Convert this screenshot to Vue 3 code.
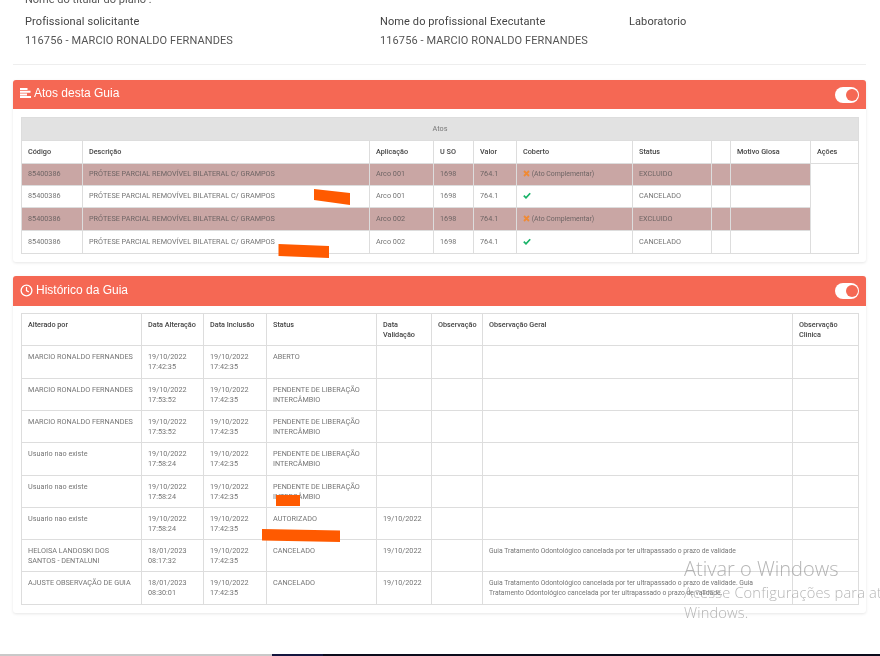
<script setup>
const atosCols = [61, 287, 64, 40, 43, 116, 79, 19, 80, 48]
const atosHead = ['Código', 'Descrição', 'Aplicação', 'U SO', 'Valor', 'Coberto', 'Status', '', 'Motivo Glosa', 'Ações']
const desc = 'PRÓTESE PARCIAL REMOVÍVEL BILATERAL C/ GRAMPOS'
const atos = [
  { arco: 'Arco 001', status: 'EXCLUIDO', glosa: true, h: 22 },
  { arco: 'Arco 001', status: 'CANCELADO', glosa: false, h: 22 },
  { arco: 'Arco 002', status: 'EXCLUIDO', glosa: true, h: 23 },
  { arco: 'Arco 002', status: 'CANCELADO', glosa: false, h: 23 }
]
const histCols = [120, 62, 63, 110, 55, 51, 310, 66]
const histHead = ['Alterado por', 'Data Alteração', 'Data Inclusão', 'Status', 'Data Validação', 'Observação', 'Observação Geral', 'Observação Clinica']
const marcio = 'MARCIO RONALDO FERNANDES'
const usuario = 'Usuario nao existe'
const pend = 'PENDENTE DE LIBERAÇÃO INTERCÂMBIO'
const guia = 'Guia Tratamento Odontológico cancelada por ter ultrapassado o prazo de validade'
const hist = [
  { by: marcio, alt: ['19/10/2022', '17:42:35'], st: 'ABERTO', val: '', geral: '', h: 33 },
  { by: marcio, alt: ['19/10/2022', '17:53:52'], st: pend, val: '', geral: '', h: 32 },
  { by: marcio, alt: ['19/10/2022', '17:53:52'], st: pend, val: '', geral: '', h: 32 },
  { by: usuario, alt: ['19/10/2022', '17:58:24'], st: pend, val: '', geral: '', h: 33 },
  { by: usuario, alt: ['19/10/2022', '17:58:24'], st: pend, val: '', geral: '', h: 32 },
  { by: usuario, alt: ['19/10/2022', '17:58:24'], st: 'AUTORIZADO', val: '19/10/2022', geral: '', h: 32 },
  { by: 'HELOISA LANDOSKI DOS SANTOS - DENTALUNI', alt: ['18/01/2023', '08:17:32'], st: 'CANCELADO', val: '19/10/2022', geral: guia, h: 32 },
  { by: 'AJUSTE OBSERVAÇÃO DE GUIA', alt: ['18/01/2023', '08:30:01'], st: 'CANCELADO', val: '19/10/2022', geral: guia + '. ' + guia + '.', h: 33 }
]
</script>

<template>
  <div class="page">
    <div class="info">
      <div class="titular">Nome do titular do plano :</div>
      <div class="info-row">
        <div class="info-col first">
          <div class="label">Profissional solicitante</div>
          <div class="value">116756 - MARCIO RONALDO FERNANDES</div>
        </div>
        <div class="info-col second">
          <div class="label">Nome do profissional Executante</div>
          <div class="value">116756 - MARCIO RONALDO FERNANDES</div>
        </div>
        <div class="info-col">
          <div class="label">Laboratorio</div>
        </div>
      </div>
    </div>

    <section class="card atos-card">
      <header class="bar bar-atos">
        <svg class="icon" width="12" height="11" viewBox="0 0 12 11">
          <path d="M0 0h7.5v2H0zM0 2.7h10.5v2H0zM0 5.4h7v2H0zM0 8.1h11v2H0z" fill="#fff" />
        </svg>
        <h2 class="title">Atos desta Guia</h2>
        <span class="toggle"><i></i></span>
      </header>
      <div class="body">
        <table class="grid grid-atos">
          <colgroup>
            <col v-for="(w, i) in atosCols" :key="i" :style="{ width: w + 'px' }" />
          </colgroup>
          <thead>
            <tr class="group"><th colspan="10">Atos</th></tr>
            <tr class="head"><th v-for="(h, i) in atosHead" :key="i">{{ h }}</th></tr>
          </thead>
          <tbody>
            <tr v-for="(a, i) in atos" :key="i" :class="{ glosa: a.glosa }" :style="{ height: a.h + 'px' }">
              <td>85400386</td>
              <td>{{ desc }}</td>
              <td>{{ a.arco }}</td>
              <td>1698</td>
              <td>764.1</td>
              <td class="cob">
                <template v-if="a.glosa">
                  <svg class="mini" width="7" height="7" viewBox="0 0 7 7">
                    <path d="M1 1l5 5M6 1l-5 5" stroke="#f08a34" stroke-width="1.8" fill="none" />
                  </svg>
                  (Ato Complementar)
                </template>
                <svg v-else class="mini" width="8" height="7" viewBox="0 0 8 7">
                  <path d="M0.8 3.6l2.2 2.2 4.2-4.6" stroke="#18b368" stroke-width="1.7" fill="none" />
                </svg>
              </td>
              <td>{{ a.status }}</td>
              <td></td>
              <td></td>
              <td v-if="i === 0" rowspan="4" class="acoes"></td>
            </tr>
          </tbody>
        </table>
      </div>
    </section>

    <section class="card hist-card">
      <header class="bar bar-hist">
        <svg class="icon" width="13" height="13" viewBox="0 0 13 13">
          <circle cx="6.5" cy="6.5" r="5.4" fill="none" stroke="#fff" stroke-width="1.3" />
          <path d="M6.5 3v3.6l2.3 1.5" fill="none" stroke="#fff" stroke-width="1.2" />
        </svg>
        <h2 class="title title-lg">Histórico da Guia</h2>
        <span class="toggle"><i></i></span>
      </header>
      <div class="body body-hist">
        <table class="grid grid-top">
          <colgroup>
            <col v-for="(w, i) in histCols" :key="i" :style="{ width: w + 'px' }" />
          </colgroup>
          <thead>
            <tr class="head-hist"><th v-for="(h, i) in histHead" :key="i">{{ h }}</th></tr>
          </thead>
          <tbody>
            <tr v-for="(r, i) in hist" :key="i" :style="{ height: r.h + 'px' }">
              <td>{{ r.by }}</td>
              <td>{{ r.alt[0] }}<br />{{ r.alt[1] }}</td>
              <td>19/10/2022<br />17:42:35</td>
              <td>{{ r.st }}</td>
              <td>{{ r.val }}</td>
              <td></td>
              <td class="geral">{{ r.geral }}</td>
              <td></td>
            </tr>
          </tbody>
        </table>
      </div>
    </section>

    <svg class="marks" width="880" height="656" viewBox="0 0 880 656">
      <g fill="#ff5a00">
        <polygon points="314,189 350,193 350,205 314,200" />
        <polygon points="278.5,244 329,246 329,258 278.5,256" />
        <polygon points="276,495 300,495 300,506 276,506" />
        <polygon points="262,529 340,530.5 340,542 262,540.5" />
      </g>
    </svg>

    <div class="watermark">
      <div class="wm-title">Ativar o Windows</div>
      <div class="wm-text">Acesse Configurações para ativar o<br />Windows.</div>
    </div>

    <div class="taskbar"><span class="tb-a"></span><span class="tb-b"></span><span class="tb-c"></span></div>
  </div>
</template>

<style>
html, body { margin: 0; background: #fff; }
</style>

<style scoped>
.page {
  position: relative;
  width: 880px;
  height: 656px;
  overflow: hidden;
  box-sizing: border-box;
  padding: 0 14px 0 13px;
  font-family: Roboto, "Liberation Sans", sans-serif;
  background: #fff;
  color: #555;
  filter: blur(.3px);
}
.info {
  display: flow-root;
  height: 64px;
  margin-bottom: 15px;
  padding-left: 12px;
  border-bottom: 1px solid #eeeeee;
}
.titular {
  height: 14px;
  margin-top: -7px;
  font-size: 11px;
  line-height: 14px;
  color: #555;
}
.info-row { display: flex; padding-top: 8px; }
.info-col { line-height: 14px; }
.first { width: 355px; }
.second { width: 249px; }
.label { font-size: 11px; color: #444; margin-bottom: 5px; letter-spacing: .1px; }
.value { font-size: 11px; color: #555; letter-spacing: .1px; }
.card {
  background: #fff;
  border-radius: 3px;
  box-shadow: 0 1px 3px rgba(0, 0, 0, .1);
}
.atos-card { margin-bottom: 14px; }
.bar {
  display: flex;
  align-items: center;
  background: #f56854;
  padding: 0 7px 0 7px;
  color: #fff;
  border-radius: 3px 3px 0 0;
}
.bar-atos { height: 29px; }
.bar-hist { height: 30px; }
.icon { flex: none; margin-right: 2px; margin-top: -2px; }
.bar-hist .icon { margin-right: 3px; margin-top: -1px; }
.title { margin: 0; font-size: 12px; font-weight: 400; flex: 1; margin-top: -4px; line-height: 14px; font-family: "Liberation Sans", sans-serif; }
.title-lg { margin-top: -3px; }
.toggle {
  position: relative;
  flex: none;
  width: 24px;
  height: 16px;
  border-radius: 8px;
  background: #fff;
}
.bar-hist .toggle { margin-top: -1px; }
.toggle i {
  position: absolute;
  right: 1.5px;
  top: 2px;
  width: 12px;
  height: 12px;
  border-radius: 50%;
  background: #f56854;
}
.body { padding: 8px 7px 8px 8px; }
.body-hist { padding-top: 7px; }
.grid {
  width: 838px;
  table-layout: fixed;
  border-collapse: collapse;
  font-size: 7.25px;
  line-height: 10px;
  color: #757575;
}
.grid th, .grid td {
  border: 1px solid #dddddd;
  padding: 0 6px;
  text-align: left;
  vertical-align: middle;
  overflow: hidden;
}
.grid th { font-weight: 500; color: #444; }
.grid-atos th, .grid-atos td { padding-bottom: 1px; }
.group { height: 23px; background: #e2e2e2; }
.group th { text-align: center; font-weight: 400; color: #777; }
.head { height: 23px; }
.glosa td:not(.acoes) { background: #c9a6a4; color: #6f6565; }
.acoes { background: #fff; }
.cob { font-size: 6.9px; }
.mini { vertical-align: -1px; }
.grid-top th, .grid-top td { vertical-align: top; padding-top: 6px; }
.head-hist { height: 32px; }
.geral { font-size: 6.77px; }
.marks { position: absolute; left: 0; top: 0; pointer-events: none; }
.watermark {
  position: absolute;
  left: 684px;
  top: 558px;
  width: 220px;
  font-family: "Open Sans", "Noto Sans", sans-serif;
  font-weight: 300;
  color: rgba(120, 120, 120, .55);
  white-space: nowrap;
}
.wm-title { font-size: 20px; line-height: 22px; }
.wm-text { font-size: 14.67px; letter-spacing: .15px; line-height: 20px; margin-top: 2px; }
.taskbar { position: absolute; left: 0; right: 0; bottom: 0; height: 2px; display: flex; }
.tb-a { width: 272px; background: #c9c9c9; }
.tb-b { width: 51px; background: #14163f; }
.tb-c { flex: 1; background: #0c0c1c; }
</style>
